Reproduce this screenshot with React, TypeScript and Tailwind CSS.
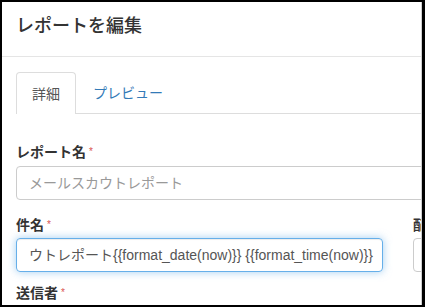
const font = "font-['Liberation_Sans','Noto_Sans_CJK_JP',sans-serif]";

function Req() {
  return <span className="ml-[3px] align-top text-[10px] font-normal text-[#d9534f]">*</span>;
}

export default function App() {
  return (
    <div
      className={`h-[307px] w-[425px] overflow-hidden border-b-2 border-l-2 border-r-[3px] border-t-2 border-black bg-white ${font}`}
    >
      <div className="h-full w-full overflow-hidden border-r border-[#cfcfcf]">
        {/* header */}
        <div className="h-[55px] border-b border-[#e5e5e5] px-[14px] pt-[12px]">
          <h4 className="text-[18px] font-medium leading-[25px] text-[#333]">レポートを編集</h4>
        </div>

        {/* body */}
        <div className="w-[792px] px-[14px] pt-[15px]">
          <div className="flex border-b border-[#ddd] text-sm">
            <div className="-mb-px h-[42px] rounded-t-[4px] border border-b-0 border-[#ddd] bg-white px-[15px] pt-[11px] leading-5 text-[#555]">
              詳細
            </div>
            <div className="ml-[2px] px-[15px] pt-[11px] leading-5 text-[#337ab7]">プレビュー</div>
          </div>

          <div className="mt-[28px] h-5 text-sm font-bold leading-5 text-[#333]">
            レポート名
            <Req />
          </div>
          <div className="mt-[4px] flex h-[34px] items-center rounded-[4px] border border-[#ccc] px-3 text-sm text-[#999]">
            メールスカウトレポート
          </div>

          <div className="mt-[15px] grid grid-cols-2 gap-[30px]">
            <div>
              <div className="h-5 text-sm font-bold leading-5 text-[#333]">
                件名
                <Req />
              </div>
              <div className="mt-[3px] flex h-[34px] items-center overflow-hidden whitespace-nowrap rounded-[4px] border border-[#66afe9] px-3 text-sm text-[#555] shadow-[inset_0_1px_1px_rgba(0,0,0,0.075),0_0_8px_rgba(102,175,233,0.6)]">
                ウトレポート{"{{format_date(now)}} {{format_time(now)}}"}
              </div>
            </div>
            <div>
              <div className="h-5 text-sm font-bold leading-5 text-[#333]">配信</div>
              <div className="mt-[3px] h-[34px] rounded-[4px] border border-[#ccc]" />
            </div>
          </div>

          <div className="mt-[11px] h-5 text-sm font-bold leading-5 text-[#333]">
            送信者
            <Req />
          </div>
        </div>
      </div>
    </div>
  );
}
